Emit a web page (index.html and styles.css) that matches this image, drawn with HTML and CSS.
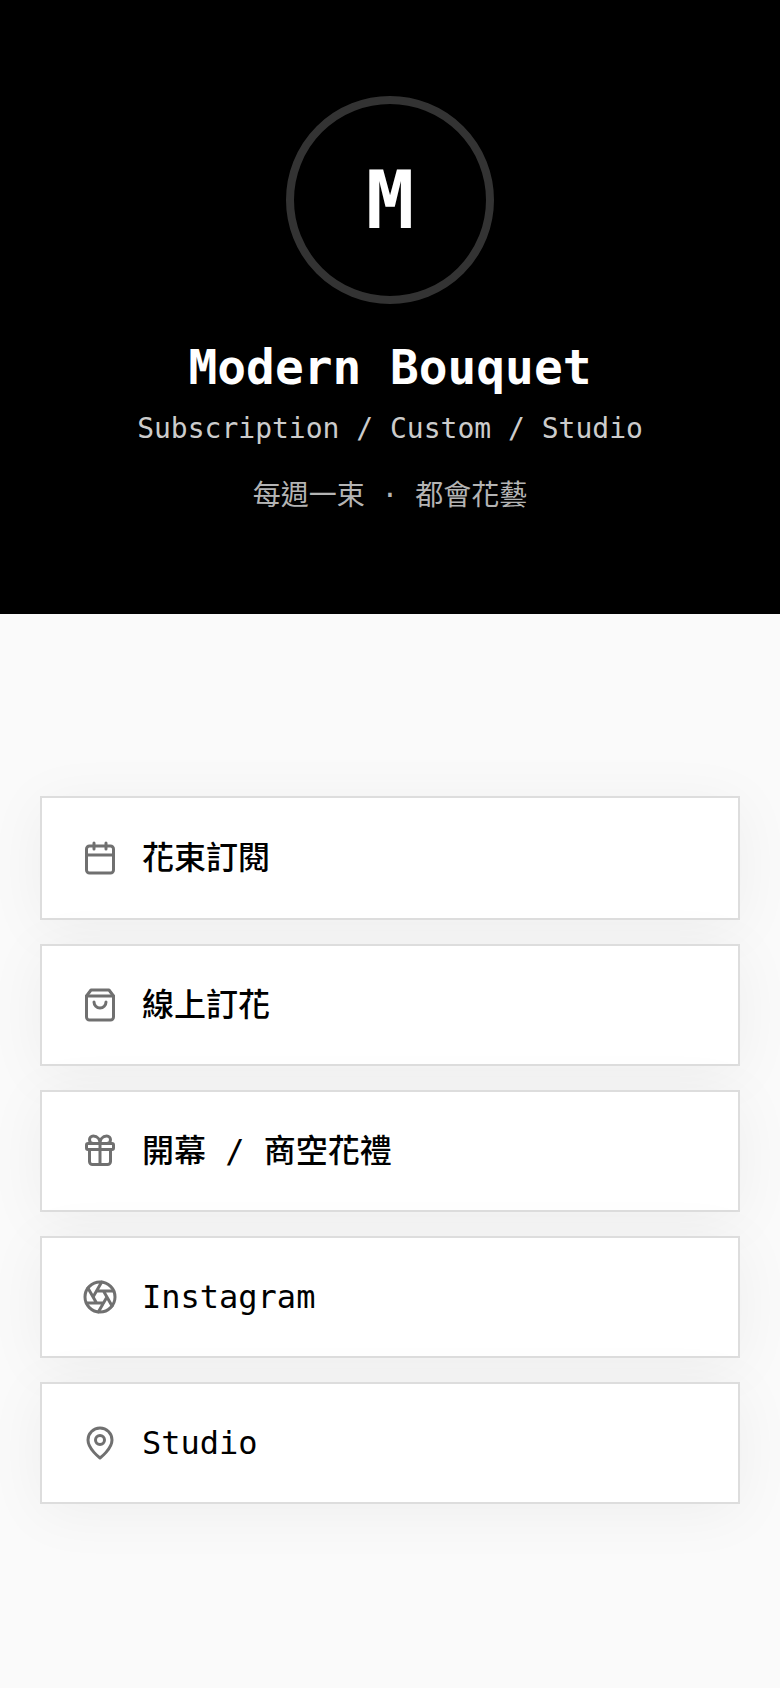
FILE: index.html
```html
<!DOCTYPE html>
<html lang="zh-Hant">
<head>
<meta charset="utf-8">
<title>Modern Bouquet</title>
<link rel="stylesheet" href="styles.css">
</head>
<body>
<header class="hero">
  <div class="avatar"><span class="avatar-letter">M</span></div>
  <h1 class="title">Modern Bouquet</h1>
  <p class="subtitle">Subscription / Custom / Studio</p>
  <p class="tagline">每週一束 · 都會花藝</p>
</header>
<main class="links">
  <a class="card" href="#">
    <svg class="icon" viewBox="0 0 24 24"><rect x="3" y="4" width="18" height="18" rx="2"/><path d="M16 2v4M8 2v4M3 10h18"/></svg>
    <span class="label">花束訂閱</span>
  </a>
  <a class="card" href="#">
    <svg class="icon" viewBox="0 0 24 24"><path d="M6 2 3 6v14a2 2 0 0 0 2 2h14a2 2 0 0 0 2-2V6l-3-4Z"/><path d="M3 6h18"/><path d="M16 10a4 4 0 0 1-8 0"/></svg>
    <span class="label">線上訂花</span>
  </a>
  <a class="card" href="#">
    <svg class="icon" viewBox="0 0 24 24"><rect x="3" y="7" width="18" height="4" rx="1"/><path d="M12 7v14"/><path d="M19 11v8a2 2 0 0 1-2 2H7a2 2 0 0 1-2-2v-8"/><path d="M7.5 7a2.5 2.5 0 0 1 0-5C10.5 2 12 4.5 12 7c0-2.5 1.5-5 4.5-5a2.5 2.5 0 0 1 0 5"/></svg>
    <span class="label">開幕 / 商空花禮</span>
  </a>
  <a class="card" href="#">
    <svg class="icon" viewBox="0 0 24 24"><circle cx="12" cy="12" r="10"/><path d="m14.31 8 5.74 9.94M9.69 8h11.48M7.38 12l5.74-9.94M9.69 16 3.95 6.06M14.31 16H2.83M16.62 12l-5.74 9.94"/></svg>
    <span class="label">Instagram</span>
  </a>
  <a class="card" href="#">
    <svg class="icon" viewBox="0 0 24 24"><path d="M20 10c0 6-8 12-8 12s-8-6-8-12a8 8 0 0 1 16 0Z"/><circle cx="12" cy="10" r="3"/></svg>
    <span class="label">Studio</span>
  </a>
</main>
</body>
</html>
```

FILE: styles.css
```css
* { box-sizing: border-box; }
html, body { margin: 0; padding: 0; }
body {
  background: #fafafa;
  font-family: "DejaVu Sans Mono", "Noto Sans CJK TC", monospace;
  min-height: 1688px;
}
.hero {
  background: #000;
  color: #fff;
  height: 614px;
  padding-top: 96px;
  display: flex;
  flex-direction: column;
  align-items: center;
}
.avatar {
  width: 208px;
  height: 208px;
  border: 8px solid #333;
  border-radius: 50%;
  display: flex;
  align-items: center;
  justify-content: center;
}
.avatar-letter { font-size: 80px; font-weight: 700; line-height: 1; padding-top: 1px; }
.title { margin: 32px 0 0; font-size: 47.8px; font-weight: 700; line-height: 64px; }
.subtitle { margin: 9px 0 0; font-size: 28px; line-height: 40px; color: #ccc; }
.tagline { margin: 23px 0 0; font-size: 28px; line-height: 48px; color: #b4b4b4; }
.links {
  padding: 182px 40px 0;
  display: flex;
  flex-direction: column;
  gap: 24px;
}
.card {
  display: flex;
  align-items: center;
  gap: 24px;
  height: 122px;
  padding: 0 40px;
  background: #fff;
  border: 2px solid #ddd;
  color: #000;
  text-decoration: none;
  box-shadow: 0 8px 60px rgba(0, 0, 0, 0.05);
}
.card:first-child { height: 124px; }
.icon {
  width: 36px;
  height: 36px;
  flex: none;
  fill: none;
  stroke: #707070;
  stroke-width: 2;
  stroke-linecap: round;
  stroke-linejoin: round;
}
.label { font-size: 32px; line-height: 44px; font-weight: 500; }
```
